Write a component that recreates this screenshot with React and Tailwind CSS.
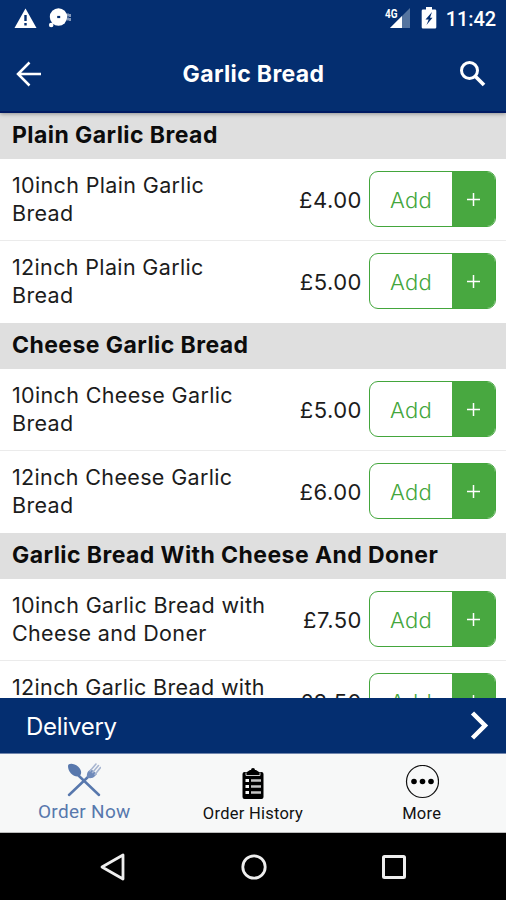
const sections = [
  {
    title: "Plain Garlic Bread",
    items: [
      { lines: ["10inch Plain Garlic", "Bread"], price: "£4.00" },
      { lines: ["12inch Plain Garlic", "Bread"], price: "£5.00" }
    ]
  },
  {
    title: "Cheese Garlic Bread",
    items: [
      { lines: ["10inch Cheese Garlic", "Bread"], price: "£5.00" },
      { lines: ["12inch Cheese Garlic", "Bread"], price: "£6.00" }
    ]
  },
  {
    title: "Garlic Bread With Cheese And Doner",
    items: [
      { lines: ["10inch Garlic Bread with", "Cheese and Doner"], price: "£7.50" },
      { lines: ["12inch Garlic Bread with"], price: "£8.50" }
    ]
  }
];

function StatusBar() {
  return (
    <div className="flex h-9 items-center justify-between pl-[14px] pr-[10px] font-[Roboto,sans-serif]">
      <div className="flex items-center">
        <svg className="h-[21px] w-[23px]" viewBox="0 0 23 21" fill="none">
          <path d="M11.5 0.5 22.5 20H.5Z" fill="#fff" />
          <path d="M11.5 7v6M11.5 15v2.5" stroke="#042e70" strokeWidth="2.4" />
        </svg>
        <svg className="ml-[11px] h-[21px] w-[24px]" viewBox="0 0 24 21" fill="none">
          <circle cx="10.500" cy="9" r="8.700" fill="#fff" />
          <rect x="9.200" y="7.900" width="3" height="2.200" fill="#042e70" />
          <circle cx="3.200" cy="17" r="2.300" fill="#fff" />
          <path d="M20 5.500v8M22 6v8" stroke="#a9b8d0" strokeWidth="1.500" strokeDasharray="3 1" />
        </svg>
      </div>
      <div className="flex items-center">
        <svg className="h-[22px] w-[28px] overflow-visible" viewBox="0 0 28 22">
          <path d="M27 1v20H7Z" fill="#55749f" />
          <path d="M19 9v12H7Z" fill="#fff" />
          <text x="2" y="11" fill="#fff" fontSize="13" fontWeight="700" textLength="12.500" lengthAdjust="spacingAndGlyphs">4G</text>
        </svg>
        <svg className="ml-[10px] h-[22px] w-[16px]" viewBox="0 0 16 22">
          <path d="M5 0h6v2.400h3a1.300 1.300 0 0 1 1.300 1.300v16.600a1.300 1.300 0 0 1-1.300 1.300H2a1.300 1.300 0 0 1-1.300-1.300V3.700A1.300 1.300 0 0 1 2 2.400h3Z" fill="#fff" />
          <path d="m11 5-6.500 7.500h3.200L5.500 18l6-7.300H9Z" fill="#042e70" />
        </svg>
        <span className="ml-[9px] pt-px text-[20px] font-medium leading-none tracking-[-0.1px]">11:42</span>
      </div>
    </div>
  );
}

function Header() {
  return (
    <header className="z-10 h-[113px] shrink-0 border-b-2 border-[#001a62] bg-[#042e70] text-white shadow-[0_1px_4px_rgba(0,0,0,0.35)]">
      <StatusBar />
      <div className="flex h-[76px] items-center justify-between px-4">
        <svg className="h-[26px] w-[26px]" viewBox="0 0 26 26" fill="none" stroke="#fff" strokeWidth="2.500">
          <path d="M25 13H2M13.500 1.500 2 13l11.500 11.500" />
        </svg>
        <h1 className="ml-1.5 text-[23px] font-bold leading-none tracking-[0.350px]">Garlic Bread</h1>
        <svg className="mr-1 h-[27px] w-[27px]" viewBox="0 0 27 27" fill="none" stroke="#fff">
          <circle cx="10.500" cy="9.500" r="8" strokeWidth="3" />
          <path d="m16.500 15.500 8.500 8.500" strokeWidth="3.700" />
        </svg>
      </div>
    </header>
  );
}

function AddButton() {
  return (
    <button className="flex h-14 w-[127px] shrink-0 overflow-hidden rounded-[9px] border border-[#43a63c] text-[#43a63c]">
      <span className="flex h-full flex-1 items-center justify-center pt-0.5 text-[22px] font-light tracking-[0.300px]">Add</span>
      <span className="flex h-full w-[43px] items-center justify-center bg-[#48a840]">
        <svg className="h-[13px] w-[13px]" viewBox="0 0 13 13" stroke="#fff" strokeWidth="1.500">
          <path d="M6.500 0v13M0 6.500h13" />
        </svg>
      </span>
    </button>
  );
}

function MenuItem({ item }) {
  return (
    <div className="flex h-[82px] items-center border-b border-[#ebebeb] pb-px pl-3 pr-[10px] last:border-transparent">
      <div className="-mt-px h-14 flex-1 whitespace-nowrap text-[21.500px] leading-[28px] tracking-[0.350px]">
        {item.lines.map((line) => (
          <p key={line}>{line}</p>
        ))}
      </div>
      <span className="mr-[7px] pt-0.5 text-[22px] tracking-[0.500px]">{item.price}</span>
      <AddButton />
    </div>
  );
}

function TabBar() {
  return (
    <nav className="flex h-[79px] shrink-0 border-b border-[#bbb] bg-[#f7f8f8] font-[Roboto,sans-serif] text-[#111]">
      <div className="flex flex-1 flex-col items-center pt-[9px] text-[#5878ad]">
        <svg className="h-[34px] w-[34px]" viewBox="0 0 34 34" fill="none">
          <path d="M12 13 32 32M22 13 2 32" stroke="#5878ad" strokeWidth="2.500" strokeLinecap="round" />
          <path d="M1 3C1 0 7 0 11 3.500c3.500 3 4 7 2 9s-6 1-9-2C2 8 1 6 1 3Z" fill="#5878ad" />
          <path d="M20 14.500c-.5-2 0-5 1.500-6.500L24 6l6 5-3 3c-2 1.500-5 1.500-7 .5Z" fill="#6f8aba" />
          <path d="m23 8 6-7M25.500 9.500l6-7M28 11.500l5.500-7" stroke="#a7b5d0" strokeWidth="1.600" strokeLinecap="round" />
        </svg>
        <span className="mt-[3px] text-[19px] leading-[24px] tracking-[0.300px]">Order Now</span>
      </div>
      <div className="flex flex-1 flex-col items-center pt-[14px]">
        <svg className="h-[31px] w-[22px]" viewBox="0 0 22 31">
          <path d="M.5 6a2 2 0 0 1 2-2H5l3-2h1a2 2 0 0 1 4 0h1l3 2h2.500a2 2 0 0 1 2 2v23a2 2 0 0 1-2 2h-17a2 2 0 0 1-2-2Z" fill="#000" />
          <path d="M4 4.500v3h14v-3" stroke="#c8c8c8" fill="none" />
          <path d="M3.500 12.500h3.500M3.500 18.500h3.500M3.500 24.500h3.500" stroke="#f7f8f8" strokeWidth="3" />
          <path d="M9 12.500h10M9 18.500h10M9 24.500h10" stroke="#c4c4c4" strokeWidth="2.500" />
        </svg>
        <span className="mt-1 text-[16.500px] leading-[22px] tracking-[0.250px]">Order History</span>
      </div>
      <div className="flex flex-1 flex-col items-center pt-[11px]">
        <svg className="h-[34px] w-[34px]" viewBox="0 0 34 34">
          <circle cx="17.500" cy="16.500" r="16" fill="none" stroke="#111" strokeWidth="1.200" />
          <circle cx="9" cy="16.500" r="2.800" />
          <circle cx="17.500" cy="16.500" r="2.800" />
          <circle cx="26" cy="16.500" r="2.800" />
        </svg>
        <span className="mt-1 text-[16.500px] leading-[22px] tracking-[0.250px]">More</span>
      </div>
    </nav>
  );
}

function SystemNav() {
  return (
    <div className="flex h-[67px] shrink-0 items-center justify-center gap-[115px] bg-black">
      <svg className="h-[28px] w-[26px]" viewBox="0 0 26 28" fill="none" stroke="#eee" strokeWidth="2.800" strokeLinejoin="round">
        <path d="M23 2v24L2 14Z" />
      </svg>
      <svg className="h-[26px] w-[26px]" viewBox="0 0 26 26" fill="none" stroke="#eee" strokeWidth="2.800">
        <circle cx="13" cy="13" r="11.200" />
      </svg>
      <svg className="h-[24px] w-[24px]" viewBox="0 0 24 24" fill="none" stroke="#eee" strokeWidth="3">
        <rect x="1.500" y="1.500" width="21" height="21" rx="1" />
      </svg>
    </div>
  );
}

function App() {
  return (
    <div className="flex h-[900px] w-[506px] flex-col overflow-hidden bg-white font-[Inter,sans-serif] text-[#1c1c1c]">
      <Header />
      <main className="min-h-0 flex-1 overflow-hidden">
        {sections.map((section) => (
          <section key={section.title}>
            <h2 className="flex h-[46px] items-center whitespace-nowrap bg-[#dfdfdf] pb-0.5 pl-3 text-[23px] font-bold tracking-[0.430px] text-[#0c0c0c]">
              {section.title}
            </h2>
            <div>
              {section.items.map((item) => (
                <MenuItem key={item.lines[0]} item={item} />
              ))}
            </div>
          </section>
        ))}
      </main>
      <div className="flex h-[56px] shrink-0 items-center justify-between border-b border-[#7186ad] bg-[#042e70] pl-[26px] pr-[17px] text-white">
        <span className="pt-0.5 text-[24px] tracking-[-0.250px]">Delivery</span>
        <svg className="h-[29px] w-[19px]" viewBox="0 0 19 29" fill="none" stroke="#fff" strokeWidth="4.500">
          <path d="m2.500 2 12.500 12.500L2.500 27" />
        </svg>
      </div>
      <TabBar />
      <SystemNav />
    </div>
  );
}

export default App;
